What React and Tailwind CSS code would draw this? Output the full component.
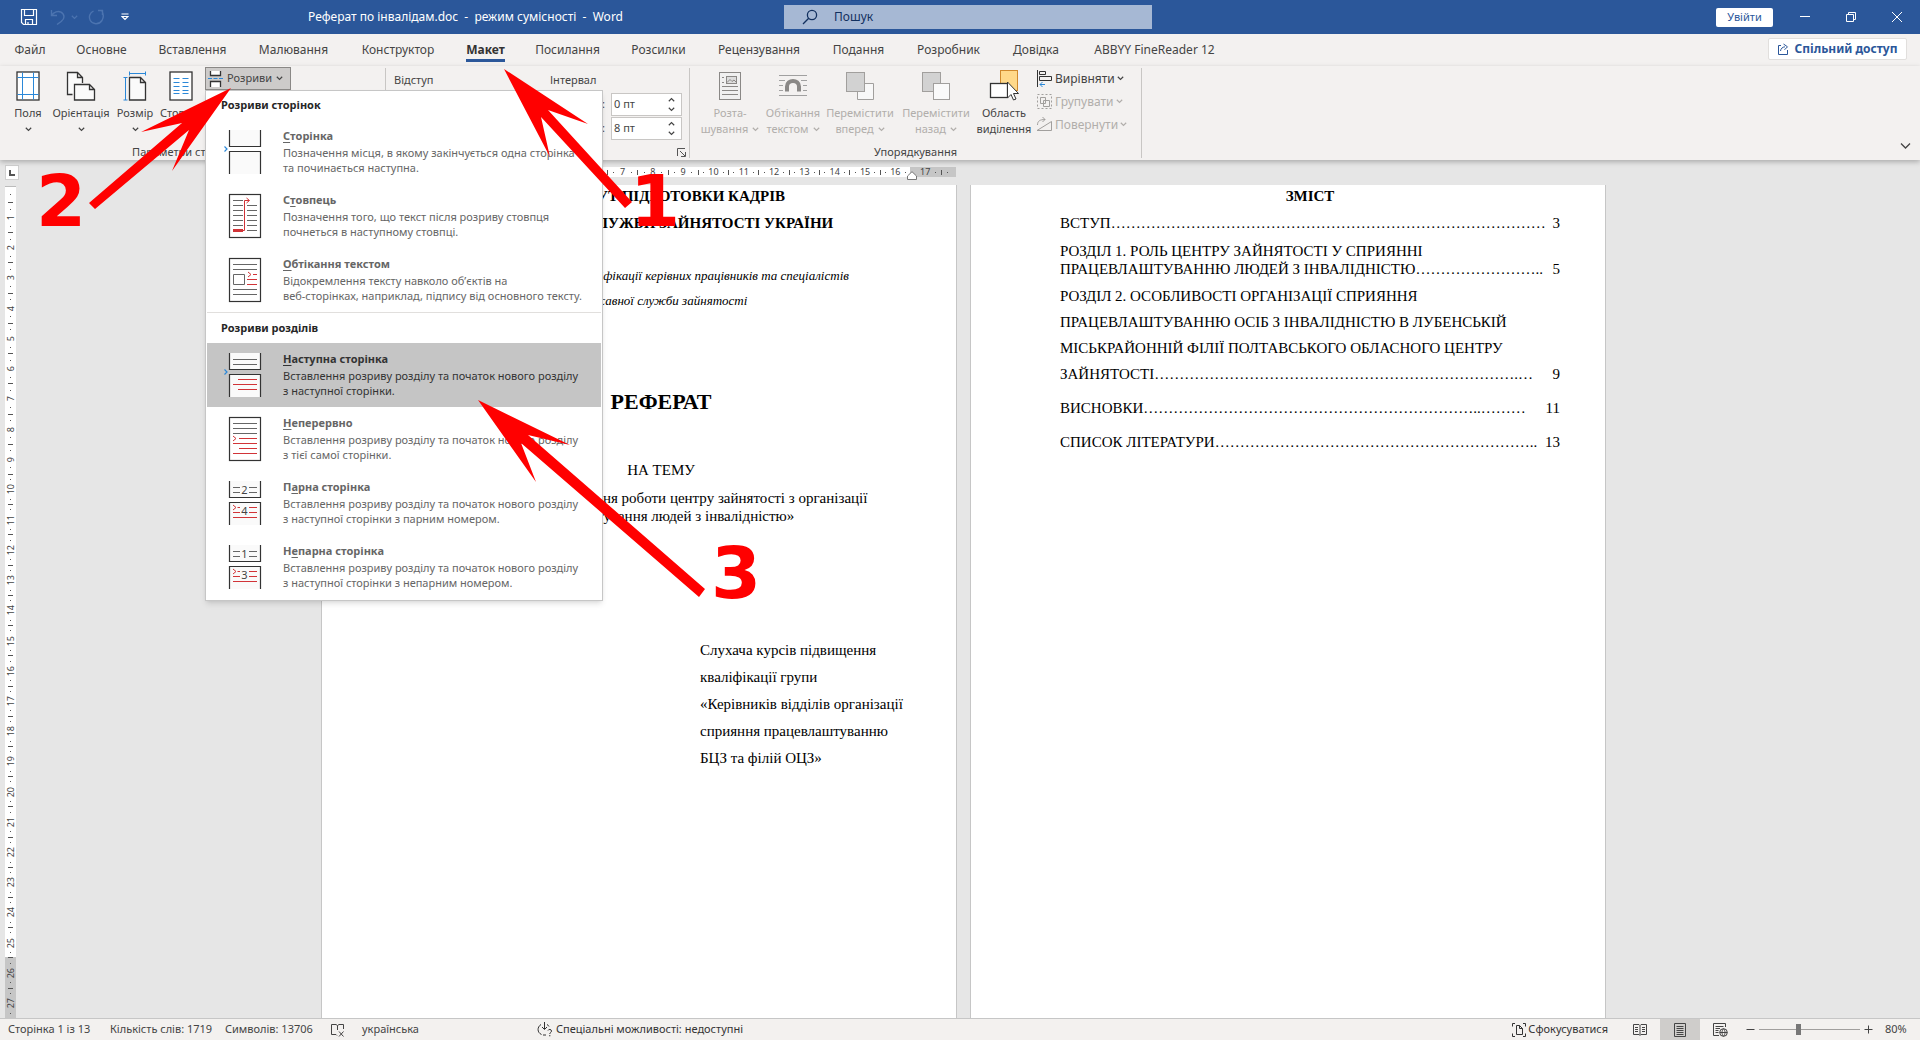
import React from 'react';

const tabs = [
    { label: 'Файл', width: 'w-[60px]' },
    { label: 'Основне', width: 'w-[83px]' },
    { label: 'Вставлення', width: 'w-[99px]' },
    { label: 'Малювання', width: 'w-[103px]' },
    { label: 'Конструктор', width: 'w-[106px]' },
    { label: 'Макет', width: 'w-[69px]', active: true },
    { label: 'Посилання', width: 'w-[95px]' },
    { label: 'Розсилки', width: 'w-[87px]' },
    { label: 'Рецензування', width: 'w-[114px]' },
    { label: 'Подання', width: 'w-[85px]' },
    { label: 'Розробник', width: 'w-[95px]' },
    { label: 'Довідка', width: 'w-[80px]' },
    { label: 'ABBYY FineReader 12', width: 'w-[157px]' }
];

const Chevron = ({ className = '' }) => (
    <svg className={`inline-block h-[5px] w-[7px] shrink-0 ${className}`} viewBox="0 0 7 5" fill="none" stroke="currentColor">
        <path d="M0.8 0.8L3.5 3.4L6.2 0.8" strokeWidth="1.2" />
    </svg>
);

/* ---------- Рядок заголовка ---------- */

const TitleBar = () => (
    <header className="flex h-[34px] shrink-0 items-center bg-[#2b579a] text-white">
        <div className="flex flex-1 items-center">
            <button aria-label="Зберегти" className="ml-[20px]">
                <svg className="h-[18px] w-[18px]" viewBox="0 0 18 18" fill="none" stroke="currentColor" strokeWidth="1.2">
                    <path d="M1.5 1.5H16.5V16.5H3.5L1.5 14.5ZM4.5 1.5V7.5H13.5V1.5M5.5 16.5V11.5H12.5V16.5M8 16.5V14" />
                </svg>
            </button>
            <button aria-label="Скасувати" className="ml-[12px] flex items-center gap-[5px] text-[#4c74b0]">
                <svg className="h-[16px] w-[16px]" viewBox="0 0 16 16" fill="none" stroke="currentColor" strokeWidth="1.4">
                    <path d="M1.5 1V6.5H7M1.8 6.2C4 3 8 1.6 11 3.2C15 5.5 14.8 10 11.5 12.2L7 15.5" />
                </svg>
                <Chevron />
            </button>
            <button aria-label="Повторити" className="ml-[10px] text-[#4c74b0]">
                <svg className="h-[16px] w-[16px]" viewBox="0 0 16 16" fill="none" stroke="currentColor" strokeWidth="1.4">
                    <path d="M10 1.5H14.5V6M14 2C15.5 5 15.8 8.5 14 11.5C11 16 4.5 15.5 2.3 11.5C0.2 7.5 2 3.8 5.5 2" />
                </svg>
            </button>
            <button aria-label="Настроїти панель швидкого доступу" className="ml-[17px]">
                <svg className="h-[8px] w-[8px]" viewBox="0 0 8 8" fill="none" stroke="currentColor" strokeWidth="1.2">
                    <path d="M0.5 1H7.5M1 3.5L4 6.5L7 3.5Z" />
                </svg>
            </button>
            <h1 className="flex-1 pl-[179px] text-[12px] whitespace-pre">Реферат по інвалідам.doc  -  режим сумісності  -  Word</h1>
        </div>
        <label className="ml-[16px] flex h-[24px] w-[368px] items-center bg-[#a6b8d4] pl-[18px] text-[#12305f]">
            <svg className="h-[16px] w-[16px]" viewBox="0 0 16 16" fill="none" stroke="currentColor" strokeWidth="1.3">
                <circle cx="10" cy="6" r="4.6" />
                <path d="M6.7 9.3L1 15" />
            </svg>
            <input type="text" placeholder="Пошук" aria-label="Пошук" className="ml-[16px] w-60 bg-transparent text-[12px] outline-none placeholder:text-[#12305f]" />
        </label>
        <div className="flex flex-1 items-center justify-end">
            <button className="h-[19px] w-[57px] rounded-[2px] bg-white text-[11px] leading-[18px] text-[#2b579a]">Увійти</button>
            <button aria-label="Згорнути" className="ml-[26px]">
                <svg className="h-[12px] w-[12px]" viewBox="0 0 12 12" stroke="currentColor"><path d="M1 5.5H11" /></svg>
            </button>
            <button aria-label="Відновити" className="ml-[34px]">
                <svg className="h-[12px] w-[12px]" viewBox="0 0 12 12" fill="none" stroke="currentColor">
                    <path d="M1.5 3.5H8.5V10.5H1.5ZM3.5 3V1.5H10.5V8.5H9" />
                </svg>
            </button>
            <button aria-label="Закрити" className="mr-[17px] ml-[34px]">
                <svg className="h-[12px] w-[12px]" viewBox="0 0 12 12" stroke="currentColor"><path d="M1 1L11 11M11 1L1 11" /></svg>
            </button>
        </div>
    </header>
);

const TabBar = () => (
    <nav className="flex h-[32px] shrink-0 items-start justify-between">
        <div className="flex">
            {tabs.map((tab) => (
                <button key={tab.label} className={`${tab.width} flex h-[28px] flex-col items-center justify-end text-[12px] leading-[18px] whitespace-nowrap`}>
                    <span className={tab.active ? 'border-b-[3px] border-[#2b579a] font-bold text-[#333]' : 'border-b-[3px] border-transparent text-[#444]'}>
                        {tab.label}
                    </span>
                </button>
            ))}
        </div>
        <button className="mt-[4px] mr-[13px] flex h-[22px] w-[139px] items-center justify-center gap-[5px] rounded-[2px] border border-[#e1dfdd] bg-white text-[12px] font-bold whitespace-nowrap text-[#2b579a]">
            <svg className="h-[12px] w-[12px]" viewBox="0 0 12 12" fill="none" stroke="currentColor">
                <path d="M4 2.5H1.5V11.5H10.5V7M3.5 8C3.8 5.5 5.5 4 8 3.8M6.5 1L10.5 3.8L7.5 6.8" />
            </svg>
            Спільний доступ
        </button>
    </nav>
);

/* ---------- Піктограми стрічки ---------- */

const MarginsIcon = () => (
    <svg className="h-[30px] w-[24px]" viewBox="0 0 24 30" fill="#fff">
        <rect x="1" y="1" width="22" height="28" stroke="#333" strokeWidth="1.3" />
        <path d="M6.5 1.5V28.5M17.5 1.5V28.5M1.5 6.5H22.5M1.5 23.5H22.5" stroke="#2b88d8" />
    </svg>
);

const OrientationIcon = () => (
    <svg className="h-[30px] w-[30px]" viewBox="0 0 30 30" fill="#fafafa" stroke="#333" strokeWidth="1.3">
        <path d="M6.5 23.5H1.5V1.5H11.5L16.5 6.5V12M11.5 1.5V6.5H16.5" />
        <path d="M8.5 13.5H23.5L28.5 18.5V29H8.5ZM23.5 13.5V18.5H28.5" />
    </svg>
);

const SizeIcon = () => (
    <svg className="h-[30px] w-[24px]" viewBox="0 0 24 30" fill="#fafafa">
        <path d="M6.5 6.5H17.5L22.5 11.5V29H6.5ZM17.5 6.5V11.5H22.5" stroke="#333" strokeWidth="1.3" />
        <path d="M6 2.5H23M6.5 0.5V4.5M22.5 0.5V4.5M2.5 6.5V29M0.5 6.5H4.5M0.5 29H4.5" stroke="#2b88d8" />
    </svg>
);

const ColumnsIcon = () => (
    <svg className="h-[30px] w-[24px]" viewBox="0 0 24 30" fill="#fff">
        <rect x="1" y="1" width="22" height="28" stroke="#333" strokeWidth="1.3" />
        <path d="M4.5 7.5H10.5M13.5 7.5H19.5M4.5 11.5H10.5M13.5 11.5H19.5M4.5 15.5H10.5M13.5 15.5H19.5M4.5 19.5H10.5M13.5 19.5H19.5M4.5 22.5H10.5M13.5 22.5H19.5" stroke="#2b88d8" />
    </svg>
);

const BreaksIcon = () => (
    <svg className="h-[18px] w-[15px]" viewBox="0 0 15 18" fill="none">
        <path d="M2.5 1V5.5H12.5V1M2.5 17V11.5H12.5V17" stroke="#333" strokeWidth="1.3" fill="#fff" />
        <path d="M0 8.5H4M5.5 8.5H9.5M11 8.5H15" stroke="#2b88d8" />
    </svg>
);

const PositionIcon = () => (
    <svg className="h-[30px] w-[24px]" viewBox="0 0 24 30" fill="none" stroke="#8a8886">
        <rect x="1.5" y="1.5" width="21" height="27" fill="#f0f0f0" />
        <rect x="8.5" y="5.5" width="10" height="7" fill="#ddd" />
        <path d="M9 11.5L12 8.5L14 10.5L16 9L18 11M4 6.5H6M4 11.5H6M4 15.5H20M4 19.5H20M4 23.5H20" />
    </svg>
);

const WrapIcon = () => (
    <svg className="h-[30px] w-[30px]" viewBox="0 0 30 30" fill="none" stroke="#a0a0a0">
        <path d="M1 4.5H29M1 9.5H7M23 9.5H29M1 14.5H5M25 14.5H29M1 19.5H5M25 19.5H29M1 24.5H29" />
        <path d="M9 20.5V15.5C9 8 21 8 21 15.5V20.5" stroke="#8a8886" strokeWidth="4" />
    </svg>
);

const ForwardIcon = () => (
    <svg className="h-[30px] w-[30px]" viewBox="0 0 30 30" stroke="#a19f9d">
        <path d="M20 12.5H28.5V28.5H12.5V20" fill="#f8f8f8" />
        <rect x="1.5" y="1.5" width="18" height="19" fill="#d2d2d2" />
    </svg>
);

const BackwardIcon = () => (
    <svg className="h-[30px] w-[30px]" viewBox="0 0 30 30" stroke="#a19f9d">
        <rect x="1.5" y="1.5" width="18" height="19" fill="#d2d2d2" />
        <rect x="12.5" y="12.5" width="16" height="16" fill="#fafafa" />
    </svg>
);

const SelectionIcon = () => (
    <svg className="h-[32px] w-[30px]" viewBox="0 0 30 32">
        <rect x="11.5" y="1.5" width="17" height="20" fill="#ffd98a" stroke="#d08a2e" />
        <rect x="1.5" y="14.5" width="17" height="14" fill="#fff" stroke="#333" strokeWidth="1.3" />
        <path d="M18.5 13V29L22 25.5L24.5 31L27 30L24.5 24.5H29.5Z" fill="#fff" stroke="#333" />
    </svg>
);

const AlignIcon = () => (
    <svg className="h-[17px] w-[17px]" viewBox="0 0 17 17" fill="none" stroke="#333">
        <path d="M1.5 0V17M3.5 1.5H9.5V4.5H3.5ZM3.5 6.5H15.5V10.5H3.5Z" />
        <path d="M4 14.5H9M6.5 12L4 14.5L6.5 17" stroke="#2b88d8" />
    </svg>
);

const GroupIcon = () => (
    <svg className="h-[17px] w-[17px]" viewBox="0 0 17 17" fill="none" stroke="#a19f9d">
        <path d="M1.5 1.5H15.5V15.5H1.5Z" strokeDasharray="2 2" />
        <path d="M4.5 4.5H9.5V10.5H4.5ZM7.5 7.5H13.5V13.5H7.5Z" />
    </svg>
);

const RotateIcon = () => (
    <svg className="h-[17px] w-[17px]" viewBox="0 0 17 17" fill="none" stroke="#a19f9d">
        <path d="M1 14.5H15.5V5.5ZM1.5 9C1.5 5 4 3.5 9 3.5M6.5 1L9 3.5L6.5 6" />
    </svg>
);

const Separator = () => <div className="my-[2px] w-px shrink-0 bg-[#c8c6c4]" />;

const BigButton = ({ icon, lines, width, disabled, arrow }) => (
    <button disabled={disabled} className={`${width} flex shrink-0 flex-col items-center text-[11px] leading-[16px] whitespace-nowrap ${disabled ? 'text-[#b1aeab]' : 'text-[#444]'}`}>
        <span className="flex h-[39px] items-end pb-[4px]">{icon}</span>
        <span>{lines[0]}</span>
        <span className="flex h-[16px] items-center gap-[4px]">
            {lines[1]}
            {arrow && <Chevron />}
        </span>
    </button>
);

const Launcher = ({ label }) => (
    <button aria-label={label}>
        <svg className="h-[9px] w-[9px]" viewBox="0 0 9 9" fill="none" stroke="#555">
            <path d="M0.5 8V0.5H8M3 3L8 8M8.5 4V8.5H4" />
        </svg>
    </button>
);

const Spinner = ({ label, value }) => (
    <div className="flex h-[24px] items-center justify-end gap-[6px]">
        <label htmlFor={label} className="text-[11px]">{label}:</label>
        <div className="flex h-[23px] w-[71px] items-center border border-[#c8c6c4] bg-white">
            <input id={label} type="text" defaultValue={value} className="w-[56px] bg-transparent pl-[2px] text-[11px] outline-none" />
            <div className="flex flex-col gap-[5px]">
                <Chevron className="rotate-180" />
                <Chevron />
            </div>
        </div>
    </div>
);

/* ---------- Меню «Розриви» ---------- */

const PageLines = ({ d }) => <path d={d} stroke="#666" />;
const RedLines = ({ d }) => <path d={d} stroke="#d13438" fill="none" />;

const BreakIcon = ({ type }) => {
    const split = type !== 'column' && type !== 'wrap' && type !== 'continuous';
    return (
        <svg className="h-[46px] w-[38px] shrink-0" viewBox="0 0 38 46" fill="none">
            {split ? (
                <path d="M5.5 1V17.5H36.5V1M5.5 45V22.5H36.5V45" fill="#fafafa" stroke="#333" strokeWidth="1.2" />
            ) : (
                <rect x="5.5" y="1.5" width="31" height="43" fill="#fff" stroke="#333" strokeWidth="1.2" />
            )}
            {(type === 'page' || type === 'next') && <path d="M0.5 17.5L3 20L0.5 22.5" stroke="#2b88d8" strokeWidth="1.2" />}
            {type === 'next' && (
                <>
                    <PageLines d="M9 7.5H33M9 12.5H33" />
                    <RedLines d="M14 27.5H33M9 32.5H33M14 37.5H33" />
                </>
            )}
            {type === 'column' && (
                <>
                    <PageLines d="M9 7.5H19M9 12.5H19M9 17.5H19M9 22.5H19M9 27.5H19M9 32.5H19M23 12.5H33M23 17.5H33M23 22.5H33M23 27.5H33M23 32.5H33M23 37.5H33" />
                    <rect x="9" y="36" width="10" height="3" fill="#d13438" />
                    <RedLines d="M19 37.5H20.5V7.5H25M22.5 5L25.5 7.5L22.5 10" />
                </>
            )}
            {type === 'wrap' && (
                <>
                    <PageLines d="M9 7.5H33M9 12.5H33M9.5 17.5H20.5V27.5H9.5ZM9 32.5H33M9 37.5H33" />
                    <RedLines d="M24 15L27 17.5L24 20M29 17.5H33M23 22.5H33M23 27.5H33" />
                </>
            )}
            {type === 'continuous' && (
                <>
                    <PageLines d="M9 7.5H33M9 12.5H33M9 17.5H33" />
                    <RedLines d="M9 20L12 22.5L9 25M15 22.5H33M9 27.5H33M15 32.5H33M9 37.5H33" />
                </>
            )}
            {(type === 'even' || type === 'odd') && (
                <>
                    <PageLines d="M9 7.5H16M25 7.5H33M9 12.5H16M25 12.5H33" />
                    <RedLines d="M9 25L12 27.5L9 30M13.5 27.5H16M25 27.5H33M9 32.5H16M25 32.5H33M9 37.5H33" />
                    <text x="20.5" y="14" fontSize="11" textAnchor="middle" fill="#444">{type === 'even' ? '2' : '1'}</text>
                    <text x="20.5" y="35" fontSize="11" textAnchor="middle" fill="#444">{type === 'even' ? '4' : '3'}</text>
                </>
            )}
        </svg>
    );
};

const pageBreaks = [
    { type: 'page', title: ['', 'С', 'торінка'], text: ['Позначення місця, в якому закінчується одна сторінка', 'та починається наступна.'] },
    { type: 'column', title: ['С', 'т', 'овпець'], text: ['Позначення того, що текст після розриву стовпця', 'почнеться в наступному стовпці.'] },
    { type: 'wrap', title: ['', 'О', 'бтікання текстом'], text: ['Відокремлення тексту навколо об’єктів на', 'веб-сторінках, наприклад, підпису від основного тексту.'] }
];

const sectionBreaks = [
    { type: 'next', title: ['', 'Н', 'аступна сторінка'], text: ['Вставлення розриву розділу та початок нового розділу', 'з наступної сторінки.'], active: true },
    { type: 'continuous', title: ['', 'Н', 'еперервно'], text: ['Вставлення розриву розділу та початок нового розділу', 'з тієї самої сторінки.'] },
    { type: 'even', title: ['П', 'а', 'рна сторінка'], text: ['Вставлення розриву розділу та початок нового розділу', 'з наступної сторінки з парним номером.'] },
    { type: 'odd', title: ['Н', 'е', 'парна сторінка'], text: ['Вставлення розриву розділу та початок нового розділу', 'з наступної сторінки з непарним номером.'] }
];

const BreakItem = ({ item }) => (
    <button role="menuitem" className={`flex h-[64px] w-full items-start pl-[17px] text-left whitespace-nowrap ${item.active ? 'bg-[#c5c5c5] text-[#333]' : 'text-[#666]'}`}>
        <span className="pt-[9px]"><BreakIcon type={item.type} /></span>
        <span className="ml-[21px] flex flex-col pt-[8px] text-[11px] leading-[15px]">
            <span className="mb-[2px] font-bold">
                {item.title[0]}<u className="underline-offset-2">{item.title[1]}</u>{item.title[2]}
            </span>
            <span>{item.text[0]}</span>
            <span>{item.text[1]}</span>
        </span>
    </button>
);

const BreaksMenu = () => (
    <div role="menu" className="absolute top-full left-0 z-20 w-[398px] border border-[#c6c6c6] bg-white p-px pt-0 shadow-md">
        <div className="flex h-[29px] items-center pl-[14px] text-[11px] font-bold text-[#262626]">Розриви сторінок</div>
        {pageBreaks.map((item) => <BreakItem key={item.type} item={item} />)}
        <div className="flex h-[31px] items-center border-t border-[#e1dfdd] pl-[14px] text-[11px] font-bold text-[#262626]">Розриви розділів</div>
        {sectionBreaks.map((item) => <BreakItem key={item.type} item={item} />)}
    </div>
);

/* ---------- Стрічка ---------- */

const Ribbon = () => (
    <section className="relative z-10 flex h-[94px] shrink-0 bg-[#f3f1f0] text-[#444] shadow-[0_2px_5px_rgba(0,0,0,0.25)]">
        <div className="flex w-[385px] shrink-0 flex-col">
            <div className="flex h-[78px] pl-[8px]">
                <BigButton icon={<MarginsIcon />} lines={['Поля']} width="w-[40px]" arrow />
                <BigButton icon={<OrientationIcon />} lines={['Орієнтація']} width="w-[66px]" arrow />
                <BigButton icon={<SizeIcon />} lines={['Розмір']} width="w-[42px]" arrow />
                <BigButton icon={<ColumnsIcon />} lines={['Стовпці']} width="w-[49px]" arrow />
                <div className="relative mt-px h-[23px]">
                    <button aria-haspopup="menu" className="flex h-[23px] w-[86px] items-center border border-[#8a8886] bg-[#cdcbca] pl-[2px] text-[11px] whitespace-nowrap">
                        <BreaksIcon />
                        <span className="ml-[4px]">Розриви</span>
                        <Chevron className="ml-[4px]" />
                    </button>
                    <BreaksMenu />
                </div>
            </div>
            <div className="flex items-center pr-[3px] text-[11px] leading-[16px]">
                <span className="flex-1 text-center">Параметри сторінки</span>
                <Launcher label="Параметри сторінки: більше" />
            </div>
        </div>
        <Separator />
        <div className="flex w-[303px] shrink-0 flex-col">
            <div className="flex h-[78px] justify-between pr-[7px] pl-[8px]">
                <div className="pt-[5px]">
                    <div className="h-[21px] text-[11px] leading-[18px]">Відступ</div>
                    <Spinner label="Ліворуч" value="0 см" />
                    <Spinner label="Праворуч" value="0 см" />
                </div>
                <div className="w-[132px] pt-[5px]">
                    <div className="h-[21px] text-[11px] leading-[18px]">Інтервал</div>
                    <Spinner label="Перед" value="0 пт" />
                    <Spinner label="Після" value="8 пт" />
                </div>
            </div>
            <div className="flex items-center pr-[3px] text-[11px] leading-[16px]">
                <span className="flex-1 text-center">Абзац</span>
                <Launcher label="Абзац: більше" />
            </div>
        </div>
        <Separator />
        <div className="flex w-[451px] shrink-0 flex-col">
            <div className="flex h-[78px] pl-[6px]">
                <BigButton icon={<PositionIcon />} lines={['Розта-', 'шування']} width="w-[68px]" arrow disabled />
                <BigButton icon={<WrapIcon />} lines={['Обтікання', 'текстом']} width="w-[58px]" arrow disabled />
                <BigButton icon={<ForwardIcon />} lines={['Перемістити', 'вперед']} width="w-[76px]" arrow disabled />
                <BigButton icon={<BackwardIcon />} lines={['Перемістити', 'назад']} width="w-[76px]" arrow disabled />
                <BigButton icon={<SelectionIcon />} lines={['Область', 'виділення']} width="w-[60px]" />
                <div className="flex flex-col pt-px pl-[2px] text-[12px] whitespace-nowrap">
                    <button className="flex h-[23px] items-center gap-[2px]"><AlignIcon />Вирівняти <Chevron /></button>
                    <button disabled className="flex h-[23px] items-center gap-[2px] text-[#b1aeab]"><GroupIcon />Групувати <Chevron /></button>
                    <button disabled className="flex h-[23px] items-center gap-[2px] text-[#b1aeab]"><RotateIcon />Повернути <Chevron /></button>
                </div>
            </div>
            <div className="text-center text-[11px] leading-[16px]">Упорядкування</div>
        </div>
        <Separator />
        <button aria-label="Згорнути стрічку" className="mt-auto mr-[9px] mb-[11px] ml-auto">
            <svg className="h-[6px] w-[11px]" viewBox="0 0 11 6" fill="none" stroke="#444" strokeWidth="1.3"><path d="M1 0.5L5.5 5L10 0.5" /></svg>
        </button>
    </section>
);

/* ---------- Лінійки ---------- */

const numbers = (from, to) => Array.from({ length: to - from + 1 }, (_, i) => from + i);

const HorizontalRuler = () => (
    <div className="relative flex h-[10px] w-[635px] bg-white text-[9px] leading-[10px] text-[#444]">
        <div className="w-[89px] bg-[#c6c6c6]" />
        <div className="w-[15px]" />
        <div className="flex w-[485px]">
            {numbers(1, 16).map((n) => (
                <div key={n} className="flex flex-1 items-center justify-between">
                    <i className="h-[5px] w-px bg-[#555]" />
                    <i className="h-px w-px bg-[#555]" />
                    <span>{n}</span>
                    <i className="h-px w-px bg-[#555]" />
                    <i />
                </div>
            ))}
        </div>
        <div className="flex flex-1 items-center gap-[5px] bg-[#c6c6c6] pl-[10px]">
            <span>17</span>
            <i className="h-px w-px bg-[#555]" />
            <i className="h-[5px] w-px bg-[#555]" />
            <i className="h-px w-px bg-[#555]" />
        </div>
        <svg className="absolute top-[4px] right-[39px] h-[9px] w-[10px]" viewBox="0 0 10 9" fill="#fff" stroke="#777">
            <path d="M5 0.7L9.5 5V8.5H0.5V5Z" />
        </svg>
    </div>
);

const VerticalRuler = () => (
    <div className="flex w-[20px] shrink-0 flex-col pl-[5px]">
        <div className="mt-[5px] flex h-[15px] w-[14px] items-center justify-center border border-[#d0d0d0] bg-white text-[#555]">
            <svg className="h-[6px] w-[6px]" viewBox="0 0 6 6"><path d="M1 0V5H6" fill="none" stroke="currentColor" strokeWidth="2" /></svg>
        </div>
        <div className="mt-[6px] flex w-[11px] flex-1 flex-col border-t border-[#bbb] bg-white text-[9px] leading-[11px] text-[#444]">
            <div className="flex h-[15px] items-center justify-center"><i className="h-px w-px bg-[#555]" /></div>
            <div className="flex flex-1 flex-col">
                {numbers(1, 27).map((n) => (
                    <div key={n} className={`flex min-h-0 flex-1 flex-col items-center justify-between ${n > 25 ? 'bg-[#c6c6c6]' : ''}`}>
                        <i className="h-px w-[5px] bg-[#555]" />
                        <i className="h-px w-px bg-[#555]" />
                        <span className="rotate-180 [writing-mode:vertical-rl]">{n}</span>
                        <i className="h-px w-px bg-[#555]" />
                        <i />
                    </div>
                ))}
            </div>
        </div>
    </div>
);

/* ---------- Документ ---------- */

const dots = (count) => '…'.repeat(count);

const contents = [
    { lines: ['ВСТУП'], leader: dots(29), page: '3', className: 'mt-[9px] leading-[18px]' },
    { lines: ['РОЗДІЛ 1. РОЛЬ ЦЕНТРУ ЗАЙНЯТОСТІ У СПРИЯННІ', 'ПРАЦЕВЛАШТУВАННЮ ЛЮДЕЙ З ІНВАЛІДНІСТЮ'], leader: dots(8) + '..', page: '5', className: 'mt-[10px] leading-[18px]' },
    { lines: ['РОЗДІЛ 2. ОСОБЛИВОСТІ ОРГАНІЗАЦІЇ СПРИЯННЯ', 'ПРАЦЕВЛАШТУВАННЮ ОСІБ З ІНВАЛІДНІСТЮ В ЛУБЕНСЬКІЙ', 'МІСЬКРАЙОННІЙ ФІЛІЇ ПОЛТАВСЬКОГО ОБЛАСНОГО ЦЕНТРУ', 'ЗАЙНЯТОСТІ'], leader: dots(24) + '.' + dots(1), page: '9', className: 'mt-[5px] leading-[26px]' },
    { lines: ['ВИСНОВКИ'], leader: dots(22) + '..' + dots(3), page: '11', className: 'mt-[12px] leading-[18px]' },
    { lines: ['СПИСОК ЛІТЕРАТУРИ'], leader: dots(21) + '..', page: '13', className: 'mt-[16px] leading-[18px]' }
];

const sheet = 'w-[636px] shrink-0 border-x border-[#c6c6c6] bg-white pt-[2px] pr-[45px] pl-[89px] font-["Liberation_Serif",serif] text-[15px] text-black whitespace-nowrap';

const TitlePage = () => (
    <article className={sheet}>
        <div className="flex flex-col items-center">
            <p className="leading-[18px] font-bold">ІНСТИТУТ ПІДГОТОВКИ КАДРІВ</p>
            <p className="mt-[9px] leading-[18px] font-bold">ДЕРЖАВНОЇ СЛУЖБИ ЗАЙНЯТОСТІ УКРАЇНИ</p>
            <p className="mt-[35px] text-[13px] leading-[18px] italic">Курси підвищення кваліфікації керівних працівників та спеціалістів</p>
            <p className="mt-[7px] text-[13px] leading-[18px] italic">державної служби зайнятості</p>
            <p className="mt-[80px] text-[22px] leading-[24px] font-bold">РЕФЕРАТ</p>
            <p className="mt-[47px] leading-[18px]">НА ТЕМУ</p>
            <p className="mt-[10px] leading-[18px]">«Напрями вдосконалення роботи центру зайнятості з організації</p>
            <p className="leading-[18px]">працевлаштування людей з інвалідністю»</p>
        </div>
        <div className="mt-[112px] ml-[289px] leading-[27px]">
            <p>Слухача курсів підвищення</p>
            <p>кваліфікації групи</p>
            <p>«Керівників відділів організації</p>
            <p>сприяння працевлаштуванню</p>
            <p>БЦЗ та філій ОЦЗ»</p>
        </div>
    </article>
);

const ContentsPage = () => (
    <article className={sheet}>
        <h2 className="text-center leading-[18px] font-bold">ЗМІСТ</h2>
        {contents.map((entry) => (
            <div key={entry.page} className={entry.className}>
                {entry.lines.slice(0, -1).map((line) => <p key={line}>{line}</p>)}
                <p className="flex justify-between">
                    <span>{entry.lines[entry.lines.length - 1]}{entry.leader}</span>
                    <span>{entry.page}</span>
                </p>
            </div>
        ))}
    </article>
);

const Workspace = () => (
    <main className="flex min-h-0 flex-1 overflow-hidden bg-[#e6e6e6]">
        <VerticalRuler />
        <div className="flex min-w-0 flex-1 justify-center pr-[13px]">
            <div className="flex flex-col">
                <div className="h-[25px] shrink-0 pt-[7px]">
                    <HorizontalRuler />
                </div>
                <div className="flex flex-1 gap-[13px]">
                    <TitlePage />
                    <ContentsPage />
                </div>
            </div>
        </div>
    </main>
);

/* ---------- Рядок стану ---------- */

const StatusBar = () => (
    <footer className="flex h-[22px] shrink-0 items-center border-t border-[#c6c6c6] bg-[#f3f1ef] text-[11px] whitespace-nowrap text-[#444]">
        <span className="ml-[8px] w-[102px]">Сторінка 1 із 13</span>
        <span className="w-[115px]">Кількість слів: 1719</span>
        <span className="w-[105px]">Символів: 13706</span>
        <button aria-label="Перевірка правопису">
            <svg className="h-[14px] w-[15px]" viewBox="0 0 15 14" fill="none" stroke="currentColor">
                <path d="M7.5 2.5L6 1.5H1.5V11.5H6L7 12.5M7.5 2.5L9 1.5H13.5V6M7.5 2.5V7M9 8.5L13.5 13.5M13.5 8.5L9 13.5" />
            </svg>
        </button>
        <span className="ml-[17px]">українська</span>
        <button className="ml-[118px] flex items-center gap-[3px] text-[#333]">
            <svg className="h-[15px] w-[16px]" viewBox="0 0 16 15" fill="none" stroke="currentColor">
                <path d="M4 2.5C0 5 0 10.5 4.5 12.5M12 4.5C11.5 3.5 11 3 10 2.5M7.5 0V7M5 5L7.5 7.5L10 5" />
                <path d="M11 8.5C11.5 7 14.5 7 14.5 9C14.5 10.5 12.8 10.3 12.8 12M12.8 13V14.3M6 13H9" />
            </svg>
            Спеціальні можливості: недоступні
        </button>
        <div className="ml-auto flex h-full items-center">
            <button className="flex items-center gap-[2px] text-[#333]">
                <svg className="h-[14px] w-[14px]" viewBox="0 0 14 14" fill="none" stroke="currentColor">
                    <path d="M0.5 3.5V0.5H3M11 0.5H13.5V3.5M0.5 10.5V13.5H3M11 13.5H13.5V10.5M4.5 2.5H7.5L10.5 5.5V11.5H4.5ZM7.5 2.5V5.5H10.5" />
                </svg>
                Сфокусуватися
            </button>
            <button aria-label="Режим читання" className="ml-[25px]">
                <svg className="h-[14px] w-[14px]" viewBox="0 0 14 14" fill="none" stroke="currentColor">
                    <path d="M7 2.5L6 1.5H0.5V11.5H6L7 12.5L8 11.5H13.5V1.5H8L7 2.5V12M2 4.5H5M2 6.5H5M2 8.5H5M9 4.5H12M9 6.5H12M9 8.5H12" />
                </svg>
            </button>
            <button aria-label="Розмітка" className="ml-[13px] flex h-full w-[40px] items-center justify-center bg-[#cfcdcb]">
                <svg className="h-[14px] w-[12px]" viewBox="0 0 12 14" fill="none" stroke="currentColor">
                    <path d="M0.5 0.5H11.5V13.5H0.5ZM2.5 3.5H9.5M2.5 5.5H9.5M2.5 7.5H9.5M2.5 9.5H9.5M2.5 11.5H9.5" />
                </svg>
            </button>
            <button aria-label="Веб-документ" className="ml-[13px]">
                <svg className="h-[14px] w-[15px]" viewBox="0 0 15 14" fill="none" stroke="currentColor">
                    <path d="M6 12.5H0.5V0.5H12.5V4M2.5 3.5H10.5M2.5 5.5H7M2.5 7.5H5.5M2.5 9.5H5.5" />
                    <circle cx="10.5" cy="9.5" r="3.8" />
                    <path d="M6.7 9.5H14.3M10.5 5.7C8.5 8 8.5 11 10.5 13.3C12.5 11 12.5 8 10.5 5.7" />
                </svg>
            </button>
            <button aria-label="Зменшити" className="ml-[18px]">
                <svg className="h-[9px] w-[9px]" viewBox="0 0 9 9" stroke="currentColor"><path d="M0.5 4.5H8.5" /></svg>
            </button>
            <input
                type="range"
                aria-label="Масштаб"
                min="0"
                max="100"
                defaultValue="39"
                className="ml-[4px] h-[12px] w-[101px] appearance-none bg-[linear-gradient(#a19f9d,#a19f9d)] bg-[length:100%_1px] bg-center bg-no-repeat [&::-webkit-slider-thumb]:h-[11px] [&::-webkit-slider-thumb]:w-[5px] [&::-webkit-slider-thumb]:appearance-none [&::-webkit-slider-thumb]:bg-[#777]"
            />
            <button aria-label="Збільшити" className="ml-[4px]">
                <svg className="h-[9px] w-[9px]" viewBox="0 0 9 9" stroke="currentColor"><path d="M0.5 4.5H8.5M4.5 0.5V8.5" /></svg>
            </button>
            <span className="ml-[12px] w-[35px]">80%</span>
        </div>
    </footer>
);

/* ---------- Стрілки з номерами кроків ---------- */

const digit = 'absolute font-["DejaVu_Sans",sans-serif] text-[72px] leading-none font-bold';

const Steps = () => (
    <div className="pointer-events-none absolute top-0 left-0 z-30 text-[#ff0000]">
        <svg className="h-[620px] w-[780px]" viewBox="0 0 780 620" fill="currentColor">
            <path d="M504 69L588 124L548 110L632 202L625 208L541 117L550 157Z" />
            <path d="M231 88L141 132L182 123L89 203L95 209L189 130L172 171Z" />
            <path d="M478 400L570 445L528 435L705 589L699 597L521 443L536 482Z" />
        </svg>
        <span className={`${digit} top-[165px] left-[630px]`}>1</span>
        <span className={`${digit} top-[165px] left-[36px]`}>2</span>
        <span className={`${digit} top-[537px] left-[711px]`}>3</span>
    </div>
);

const App = () => {
    return (
        <div className='relative flex h-screen flex-col overflow-hidden bg-[#f3f1f0] font-["Noto_Sans",sans-serif]'>
            <TitleBar />
            <TabBar />
            <Ribbon />
            <Workspace />
            <StatusBar />
            <Steps />
        </div>
    );
};

export default App;
